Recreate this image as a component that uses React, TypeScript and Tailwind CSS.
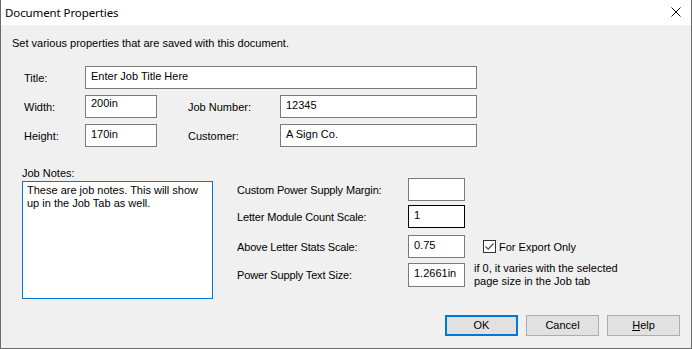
import React from "react";

function Box({ className = "", children }: { className?: string; children?: React.ReactNode }) {
  return (
    <div
      className={`h-[23px] shrink-0 bg-white border border-[#7a7a7a] pl-[5px] pt-[2px] leading-[14px] whitespace-nowrap overflow-hidden ${className}`}
    >
      {children}
    </div>
  );
}

function Btn({ children, primary = false }: { children: React.ReactNode; primary?: boolean }) {
  return (
    <div
      className={`w-[73px] h-[21px] flex items-center justify-center bg-[#e1e1e1] leading-[13px] ${
        primary ? "border-2 border-[#0078d7]" : "border border-[#adadad]"
      }`}
    >
      {children}
    </div>
  );
}

export default function App() {
  return (
    <div className="w-[692px] h-[349px] flex flex-col border-l border-r border-b border-[#6a6a6a] bg-[#f0f0f0] text-black font-['Liberation_Sans',Arial,sans-serif] text-[11px]">
      {/* Title bar */}
      <div className="h-[25px] shrink-0 bg-white flex items-center justify-between pl-[4px] pr-[10px]">
        <span className="font-['Noto_Sans',sans-serif] text-[11.5px] tracking-[-0.1px] leading-[16px]">Document Properties</span>
        <svg width="10" height="10" viewBox="0 0 10 10" className="mb-[1px]">
          <path d="M0.5 0.5 L9.5 9.5 M9.5 0.5 L0.5 9.5" stroke="#111" strokeWidth="1" fill="none" />
        </svg>
      </div>

      {/* Body */}
      <div className="flex-1 flex flex-col pl-[11px] pr-[11px]">
        <p className="mt-[12px] leading-[13px]">Set various properties that are saved with this document.</p>

        <div className="mt-[16px] ml-[12px] flex items-center">
          <span className="w-[61px] leading-[14px]">Title:</span>
          <Box className="w-[392px]">Enter Job Title Here</Box>
        </div>

        <div className="mt-[6px] ml-[12px] flex items-center">
          <span className="w-[61px] leading-[14px]">Width:</span>
          <Box className="w-[72px] !pt-0">200in</Box>
          <span className="ml-[31px] w-[92px] leading-[14px]">Job Number:</span>
          <Box className="w-[197px]">12345</Box>
        </div>

        <div className="mt-[6px] ml-[12px] flex items-center">
          <span className="w-[61px] leading-[14px]">Height:</span>
          <Box className="w-[72px]">170in</Box>
          <span className="ml-[31px] w-[92px] leading-[14px]">Customer:</span>
          <Box className="w-[197px]">A Sign Co.</Box>
        </div>

        {/* Lower section */}
        <div className="mt-[20px] ml-[10px] flex">
          <div className="flex flex-col">
            <span className="leading-[13px]">Job Notes:</span>
            <div className="mt-[1px] w-[191px] h-[118px] bg-white border border-[#0078d7] pl-[4px] pt-[2px] leading-[13px]">
              These are job notes. This will show
              <br />
              up in the Job Tab as well.
            </div>
          </div>

          <div className="ml-[24px] mt-[11px] flex flex-col">
            <div className="flex items-center">
              <span className="w-[171px] leading-[14px] tracking-[-0.15px]">Custom Power Supply Margin:</span>
              <Box className="w-[57px]"></Box>
            </div>
            <div className="mt-[4px] flex items-center">
              <span className="w-[171px] leading-[14px] tracking-[-0.15px]">Letter Module Count Scale:</span>
              <Box className="w-[57px] !border-black">1</Box>
            </div>
            <div className="mt-[7px] flex items-center">
              <span className="w-[171px] leading-[14px] tracking-[-0.15px]">Above Letter Stats Scale:</span>
              <Box className="w-[57px]">0.75</Box>
              <div className="ml-[18px] w-[13px] h-[13px] bg-white border border-[#333333] flex items-center justify-center">
                <svg width="11" height="11" viewBox="0 0 11 11">
                  <path d="M1.5 5.5 L4.2 8.2 L9.5 2.5" stroke="#4a4a4a" strokeWidth="1.2" fill="none" />
                </svg>
              </div>
              <span className="ml-[3px] leading-[14px]">For Export Only</span>
            </div>
            <div className="mt-[4px] flex items-center">
              <span className="w-[171px] leading-[14px] tracking-[-0.15px]">Power Supply Text Size:</span>
              <Box className="w-[57px] h-[24px]">1.2661in</Box>
              <span className="ml-[9px] self-start leading-[13px]">
                if 0, it varies with the selected
                <br />
                page size in the Job tab
              </span>
            </div>
          </div>
        </div>

        {/* Buttons */}
        <div className="mt-[16px] flex justify-end gap-[8px]">
          <Btn primary>OK</Btn>
          <Btn>Cancel</Btn>
          <Btn>
            <span>
              <span className="underline">H</span>elp
            </span>
          </Btn>
        </div>
      </div>
    </div>
  );
}
